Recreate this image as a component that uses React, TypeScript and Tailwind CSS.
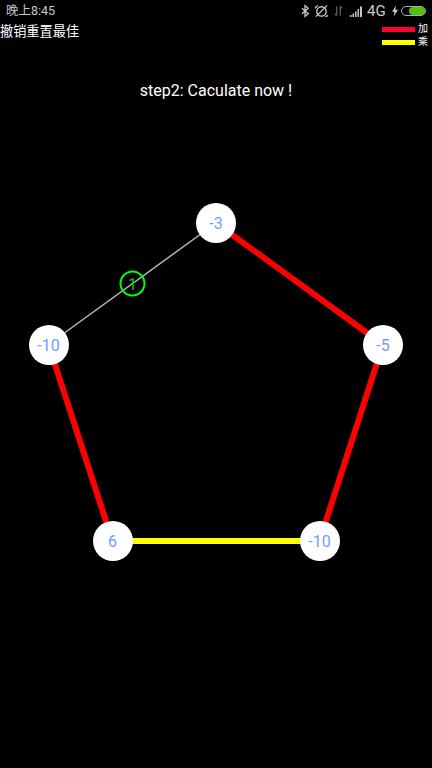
const nodes = [
  { label: "-3", x: 216, y: 223 },
  { label: "-5", x: 383, y: 344.5 },
  { label: "-10", x: 319.5, y: 541 },
  { label: "6", x: 112.5, y: 541 },
  { label: "-10", x: 48.5, y: 344.5 },
];

function StatusIcons() {
  return (
    <div className="flex items-center text-[#c8c8c8]">
      {/* bluetooth */}
      <svg width="9" height="14" viewBox="0 0 10 14" fill="none" stroke="#c8c8c8" strokeWidth="1.5">
        <path d="M1 4l7 6-3.500 3V1L8 4l-7 6" />
      </svg>
      {/* alarm off */}
      <svg className="ml-[4px]" width="15" height="14" viewBox="0 0 16 14" fill="none" stroke="#c8c8c8" strokeWidth="1.5">
        <circle cx="8" cy="7.500" r="5" />
        <path d="M2 13L14 1M1 4l3-3M12 13l3-1" />
      </svg>
      {/* data arrows */}
      <svg className="ml-[5px]" width="9" height="14" viewBox="0 0 10 14" fill="none" stroke="#5a5a5a" strokeWidth="1.5">
        <path d="M3 2v10M1 10l2 2.500M7 12V2M9 4L7 1.500" />
      </svg>
      {/* signal */}
      <svg className="ml-[7px]" width="12" height="11" viewBox="0 0 12 11" fill="#c8c8c8">
        <path d="M0 9h1.500v2H0zM2.500 7.500H4V11H2.500zM5 5.500h1.500V11H5zM7.500 3H9v8H7.500zM10 .500h2V11h-2z" />
      </svg>
      <span className="ml-[5px] w-[18px] pt-[1px] text-[15px] leading-none">4G</span>
      <svg className="ml-[7px]" width="6" height="12" viewBox="0 0 7 13" fill="#c8c8c8">
        <path d="M4.500 0L0 7.500h2.800L2 13l5-8H4z" />
      </svg>
      {/* battery */}
      <div className="ml-[3px] flex h-[10px] w-[25px] justify-end rounded-full border border-[#b0b0b0] bg-black">
        <div className="h-full w-[16px] rounded-full bg-[#55c010]" />
      </div>
    </div>
  );
}

export default function App() {
  return (
    <div
      className="relative h-[768px] w-[432px] overflow-hidden bg-black text-white"
      style={{ fontFamily: '"Roboto", "Noto Sans CJK SC", sans-serif' }}
    >
      {/* status bar */}
      <div className="flex h-[22px] items-center justify-between pl-[6px] pr-[6px]">
        <span className="text-[12.500px] leading-none text-[#c8c8c8]">晚上8:45</span>
        <StatusIcons />
      </div>

      {/* toolbar + legend */}
      <div className="flex items-start justify-between pr-[4px]">
        <span className="text-[13.200px] leading-[19px]">撤销重置最佳</span>
        <div className="flex flex-col gap-[3px] pt-[2px]">
          <div className="flex h-[10px] items-center gap-[3px]">
            <div className="h-[5px] w-[33px] bg-[#ff0033]" />
            <span className="text-[10px] leading-none">加</span>
          </div>
          <div className="flex h-[10px] items-center gap-[3px]">
            <div className="h-[5px] w-[33px] bg-[#ffff00]" />
            <span className="text-[10px] leading-none">乘</span>
          </div>
        </div>
      </div>

      <p className="mt-[34px] text-center text-[16px] leading-[19px]">step2: Caculate now !</p>

      {/* graph */}
      <svg className="absolute left-0 top-0" width="432" height="768" fill="none">
        <line x1="216" y1="223" x2="48.500" y2="344.500" stroke="#b4b4b4" strokeWidth="1.500" />
        <line x1="216" y1="223" x2="383" y2="344.500" stroke="#ff0000" strokeWidth="6" />
        <line x1="383" y1="344.500" x2="319.500" y2="541" stroke="#ff0000" strokeWidth="6" />
        <line x1="319.500" y1="541" x2="112.500" y2="541" stroke="#ffff00" strokeWidth="6" />
        <line x1="112.500" y1="541" x2="48.500" y2="344.500" stroke="#ff0000" strokeWidth="6" />
        <circle cx="132.500" cy="283.500" r="12" stroke="#00ff00" strokeWidth="2" />
      </svg>

      <span className="absolute left-[120px] top-[275px] w-[25px] text-center text-[16px] leading-[19px] text-[#00c800]">
        1
      </span>

      {nodes.map((n, i) => (
        <div
          key={i}
          className="absolute flex h-[40px] w-[40px] -translate-x-1/2 -translate-y-1/2 items-center justify-center rounded-full bg-white pt-[2px] text-[16px] text-[#6d9eff]"
          style={{ left: n.x, top: n.y }}
        >
          {n.label}
        </div>
      ))}
    </div>
  );
}
